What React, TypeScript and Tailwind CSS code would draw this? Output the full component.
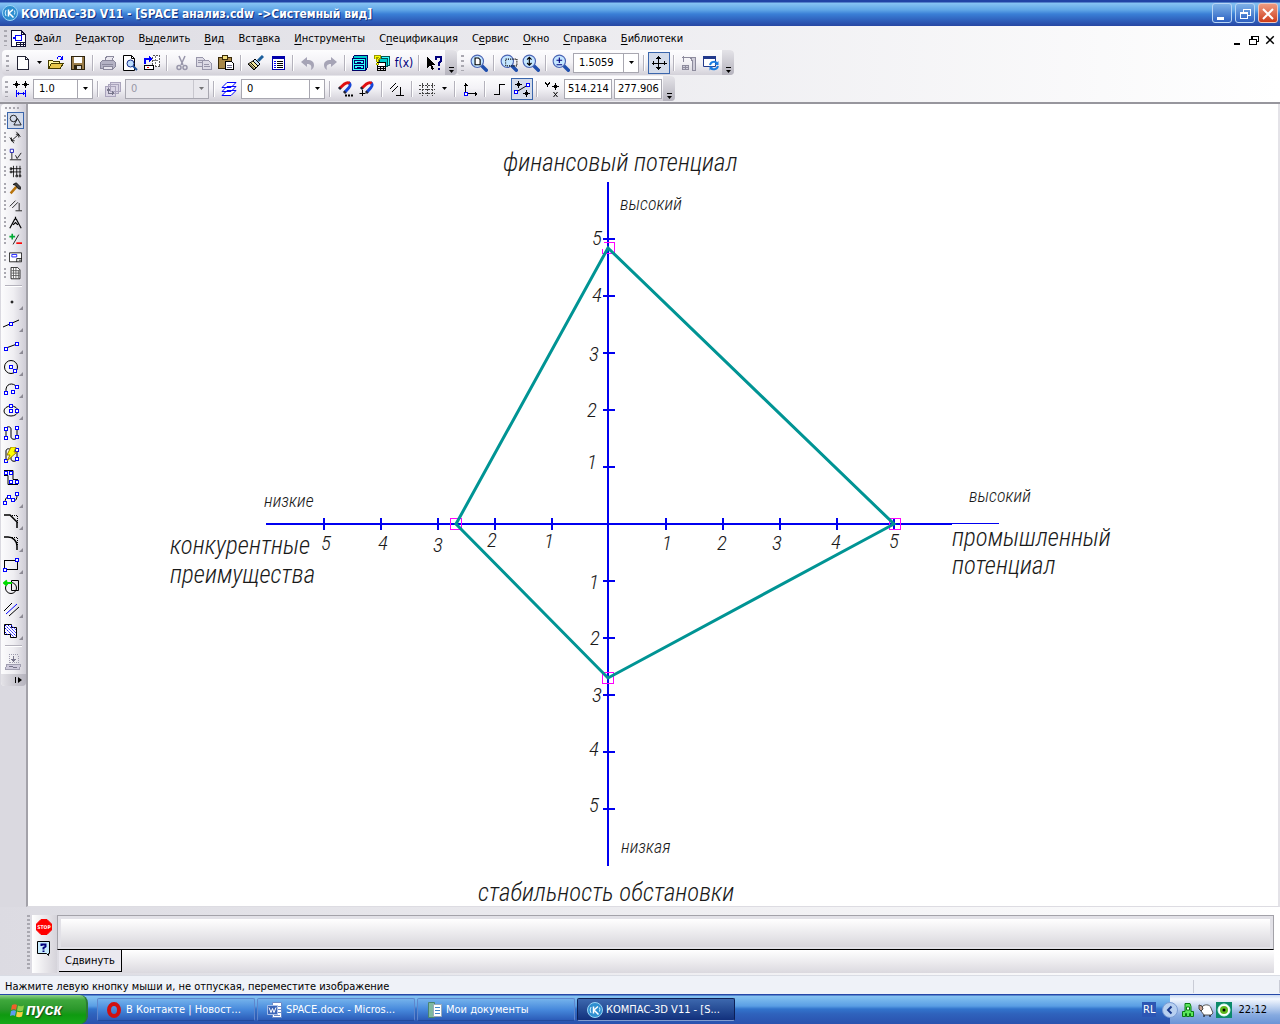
import { useState } from 'react';
import type { ReactNode } from 'react';
import { clsx } from 'clsx';

interface IcoProps {
    children: ReactNode;
    smooth?: boolean;
    className?: string;
}

const Ico = ({ children, smooth, className = 'h-4 w-4' }: IcoProps) => (
    <svg
        viewBox="0 0 16 16"
        fill="none"
        stroke="#000"
        shapeRendering={smooth ? 'auto' : 'crispEdges'}
        className={clsx('block shrink-0', className)}
        aria-hidden="true"
    >
        {children}
    </svg>
);

// Small blue anchor point used by most drawing tools
const Node = ({ x, y }: { x: number; y: number }) => (
    <rect x={x - 1.5} y={y - 1.5} width="3" height="3" fill="#fff" stroke="#00f" shapeRendering="crispEdges" />
);

/* ---------- file and view icons ---------- */

const NewIcon = () => (
    <Ico>
        <path d="M2.500 1.500h8l3 3v10h-11z" fill="#fff" stroke="#223" />
        <path d="M10.500 1.500v3h3" stroke="#223" />
    </Ico>
);

const OpenIcon = () => (
    <Ico>
        <path d="M.5 13.500v-8h4l1 1h6v2" fill="#fff7a0" stroke="#443c00" />
        <path d="M.5 13.500l3-5h12l-3.500 5z" fill="#e8c84c" stroke="#443c00" />
        <path d="M9 3.500c1-2.500 4-2.500 5 0M14.500 1v3.500h-3" stroke="#00f" />
    </Ico>
);

const SaveIcon = () => (
    <Ico>
        <path d="M1.500 1.500h13v13h-13z" fill="#9a7d4a" stroke="#2d2410" />
        <path d="M4 2h8v6H4z" fill="#fff" stroke="none" />
        <path d="M4.500 10.500h7v4h-7z" fill="#ddd" stroke="#2d2410" />
        <path d="M5 11h2v3H5z" fill="#2d2410" stroke="none" />
    </Ico>
);

const PrintIcon = () => (
    <Ico>
        <path d="M4.500 6l2-4.500h7L12 6" fill="#e8e6ee" stroke="#8a889c" />
        <path d="M.5 7.500l2-2h11l2 2v4l-2 2H.5z" fill="#b4b2c4" stroke="#8a889c" />
        <path d="M2 9.500h11M3 11.500h9v3H3z" fill="#e8e6ee" stroke="#8a889c" />
    </Ico>
);

const PreviewIcon = () => (
    <Ico smooth>
        <path d="M1.500.5h8l3 3v12h-11z" fill="#fff" />
        <path d="M9.500.5v3h3" />
        <circle cx="8.500" cy="8.500" r="3.500" fill="#bfe0ff" stroke="#1c2f8c" />
        <path d="M11 11l4 4" stroke="#1c4f9c" strokeWidth="2" />
    </Ico>
);

const LayoutIcon = () => (
    <Ico>
        <path d="M8.500.5h7v11h-7z" fill="#fff" stroke="#555" strokeDasharray="2 1" />
        <path d="M11.500 1v10M9 5.500h6" stroke="#777" strokeDasharray="2 1" />
        <path d="M.5 10.500h9v4h-9z" fill="#fff" />
        <path d="M3 12.500h2" stroke="#f00" />
        <path d="M1 9V4h5" stroke="#00f" strokeWidth="2" />
        <path d="M5 1l3 3-3 3z" fill="#00f" stroke="#00f" />
    </Ico>
);

const CutIcon = () => (
    <Ico smooth>
        <g stroke="#9896aa" strokeWidth="1.500">
            <path d="M5 1l4 9M11 1L7 10" />
            <circle cx="5" cy="12.500" r="2" />
            <circle cx="11" cy="12.500" r="2" />
        </g>
    </Ico>
);

const CopyIcon = () => (
    <Ico>
        <g fill="#dddbe6" stroke="#9896aa">
            <path d="M.5 2.500h6l2 2v7h-8z" />
            <path d="M6.500 5.500h6l3 3v6h-9z" />
            <path d="M2 5.500h4M2 7.500h4M8 9.500h5M8 11.500h6" />
        </g>
    </Ico>
);

const PasteIcon = () => (
    <Ico>
        <path d="M.5 2.500h13v11H.5z" fill="#a88848" stroke="#3a2a08" />
        <path d="M4.500.5h5v4h-5z" fill="#f4e080" stroke="#3a2a08" />
        <path d="M7.500 6.500h6l2 2v6h-8z" fill="#fff" />
        <path d="M9 10.500h5M9 12.500h5" stroke="#668" />
    </Ico>
);

const BrushIcon = () => (
    <Ico smooth>
        <path d="M15 1l-5 5" stroke="#1c5f9c" strokeWidth="3" />
        <path d="M7 4l5 5-2 2-5-5z" fill="#cde" />
        <path d="M5 6l5 5-4 4L0 9z" fill="#f5e9a0" />
        <path d="M3 8l5 5M1.500 9l5 5" />
    </Ico>
);

const PropsIcon = () => (
    <Ico>
        <path d="M2.500 1.500h12v13h-12z" fill="#fff" stroke="#00a" />
        <path d="M2 2.500h13" stroke="#00a" strokeWidth="3" />
        <path d="M4 6.500h2M4 8.500h2M4 10.500h2M4 12.500h2" stroke="#00f" />
        <path d="M7 6.500h6M7 8.500h6M7 10.500h6M7 12.500h6" />
    </Ico>
);

const UndoIcon = ({ flip }: { flip?: boolean }) => (
    <Ico smooth>
        <g transform={flip ? 'translate(16 0) scale(-1 1)' : undefined}>
            <path d="M1 7l6-5v3c5 0 7 2 7 5 0 2-1 4-3 5 1-4 0-6-4-6v3z" fill="#a6a4b6" stroke="none" />
        </g>
    </Ico>
);

const ManagerIcon = () => (
    <Ico>
        <path d="M.5 3.500l2-3h13v12l-2 3H.5z" fill="#0cc" stroke="#006" />
        <path d="M.5 3.500h13v12H.5z" fill="#3ff" stroke="#006" />
        <path d="M2.500 5.500h9v3h-9zM2.500 10.500h9v3h-9zM5 7h4M5 12h4" stroke="#006" />
    </Ico>
);

const TreeIcon = () => (
    <Ico>
        <path d="M7.500 1.500h8v9h-8z" fill="#3ff" stroke="#055" />
        <path d="M5.500 3.500h8v8h-8z" fill="#0cc" stroke="#055" />
        <path d="M3.500 7.500h8v4h-8z" fill="#fff" />
        <path d="M3.500 11.500h8v4h-8zM6.500 12v3M9.500 12v3M4 13.500h7" />
        <path d="M1 4V1h4v2L3 5v2M3 8v2" stroke="#990" strokeWidth="3" />
        <path d="M1 4V1h4v2L3 5v2M3 8v2" stroke="#ff0" />
    </Ico>
);

const FxIcon = () => <span className="text-[12px] leading-4 text-[#00007c]">f(x)</span>;

const HelpArrowIcon = () => (
    <Ico>
        <path d="M1 2v11l3-3 2 5 2-1-2-4h4z" fill="#000" stroke="none" />
        <path d="M10 5V2h5v4l-2.500 2v3M12.500 13v2" stroke="#00007c" strokeWidth="2" />
    </Ico>
);

const Lens = ({ children }: { children: ReactNode }) => (
    <Ico smooth className="h-[18px] w-[18px]">
        <path d="M10.500 10.500l4 4" stroke="#1f4fae" strokeWidth="3" strokeLinecap="round" />
        <circle cx="6.500" cy="6.500" r="5.500" fill="#c4e6ff" stroke="#4a64b4" />
        {children}
    </Ico>
);

const PanIcon = () => (
    <Ico>
        <path d="M7.500 1v14M.5 8h15" />
        <path d="M5 3.500h5M6 2.500h3M5 12.500h5M6 13.500h3M2.500 6v4M13.500 6v4" />
    </Ico>
);

const CaliperIcon = () => (
    <Ico>
        <g fill="#cfcdd9" stroke="#8d8b9d">
            <path d="M1 2.500h14M2.500 1v6M9.500 2.500h5v13h-3v-9z" />
            <path d="M1.500 10.500h6v4h-6zM4.500 11v3M2 12.500h5" />
        </g>
    </Ico>
);

const RefreshIcon = () => (
    <Ico smooth>
        <path d="M.5 1.500h12v10H.5z" fill="#fff" stroke="#223a8c" />
        <path d="M0 2.500h13" stroke="#223a8c" strokeWidth="3" />
        <path d="M7 10c1-4 6-4 7-1M15 11c-1 4-6 4-7 2" stroke="#1a7be0" strokeWidth="2" />
        <path d="M15.500 6v4h-4zM6.500 15.500v-4h4z" fill="#1a7be0" stroke="none" />
    </Ico>
);

/* ---------- current state icons ---------- */

const StepIcon = () => (
    <Ico>
        <path d="M3.500 0v7M0 3.500h7M12.500 0v7M9 3.500h7M2.500 2.500h2v2h-2zM11.500 2.500h2v2h-2z" />
        <path d="M3.500 9v7M12.500 9v7M4 12.500h8M5.500 11v3M10.500 11v3" stroke="#00f" />
    </Ico>
);

const ViewsIcon = () => (
    <Ico>
        <path d="M5.500 1.500h10v9h-10zM3.500 3.500h10v9h-10zM.5 5.500h10v10h-10z" fill="#d9d4e4" stroke="#aaa4bc" />
        <path d="M3.500 8v4h5M2 9.500l1.500-2 1.500 2M7 10.500l2 1.500-2 2" stroke="#77758a" />
    </Ico>
);

const LayersIcon = () => (
    <Ico smooth>
        <path
            d="M1 14.500h9l5-5H6zM1 10.500h9l5-5H6zM1 6.500h9l5-5H6z"
            fill="#fff"
            stroke="#00f"
        />
    </Ico>
);

const Magnet = ({ cross }: { cross?: boolean }) => (
    <Ico smooth>
        <path d="M8 11l4-4.500c2-2 1-4-.5-5" stroke="#1747d8" strokeWidth="3" />
        <path d="M3 7l4.500-4c2-1.500 3.500-2 5-.5" stroke="#e01010" strokeWidth="3" />
        <path d="M2 8l1.500-1.500M7 12l1.500-1.500" stroke="#223" strokeWidth="3" />
        {cross ? (
            <path d="M3.500 9v6M.5 12.500h6" />
        ) : (
            <path d="M8 14.500h2M11 14.500h2M14 14.500h2" strokeWidth="2" />
        )}
    </Ico>
);

const ParallelIcon = () => (
    <Ico smooth>
        <path d="M1 8l6-6M3 11l6-6" />
        <path d="M11.500 6v8M7 14.500h8" />
    </Ico>
);

const GridIcon = () => (
    <Ico>
        <path d="M3.500 2v13M8.500 2v13M13.500 2v13M0 4.500h16M0 8.500h16M0 12.500h16" stroke="#444" strokeDasharray="2 1" />
    </Ico>
);

const AxesIcon = () => (
    <Ico>
        <path d="M3.500 2v10.500H15M1.500 4h4M13.500 10.500v4M2.500 3h2M14.500 11.500v2" />
        <Node x={4} y={13} />
    </Ico>
);

const OrthoIcon = () => (
    <Ico>
        <path d="M2 13.500h5.500v-10H13" />
    </Ico>
);

const SnapIcon = () => (
    <Ico>
        <path d="M3 10.500L13 4.500" shapeRendering="auto" />
        <path d="M4.500 0v7M1 3.500h7M12.500 9v7M9 12.500h7M3.500 2.500h2v2h-2zM11.500 11.500h2v2h-2z" />
        <Node x={2} y={11} />
        <Node x={14} y={4} />
    </Ico>
);

const CoordIcon = () => (
    <Ico>
        <path d="M1.500 1v1l2 2v2M5.500 1v1l-2 2" />
        <path d="M11.500 2v7M8 5.500h7M10.500 4.500h2v2h-2z" />
        <path d="M9.500 11l4 5M13.500 11l-4 5" shapeRendering="auto" />
    </Ico>
);

/* ---------- left panel icons ---------- */

const panelIcons: { label: string; icon: ReactNode }[] = [
    { label: 'Геометрия', icon: <><circle cx="5.500" cy="5.500" r="4" /><path d="M10.500 5.500l4.500 8H6z" /></> },
    { label: 'Размеры', icon: <path d="M3 12l9-8M1 8l5 7M9 1l5 6M3 12v-4M3 12h4M12 4H8.500M12 4v4" /> },
    { label: 'Обозначения', icon: <><path d="M3.500 6v8M1 14.500h14M8 9l2 4 5-7" /><path d="M1.500 1.500h4v4h-4z" fill="#fff" stroke="#00a" /></> },
    { label: 'Обозначения для строительства', icon: <path d="M5.500 1v14M9.500 1v12M13.500 1v12M2 4.500h13M3 8.500h12M1.500 3.500h2v2h-2zM1.500 7.500h2v2h-2zM8.500 12.500h2v2h-2zM12.500 12.500h2v2h-2z" /> },
    { label: 'Редактирование', icon: <><path d="M9 6l-7 8" stroke="#b8740c" strokeWidth="3" /><path d="M5 3l4-2 5 5v3l-3-1-3-4z" fill="#444" /></> },
    { label: 'Параметризация', icon: <path d="M1 9l7-7M4 11l7-7M12.500 5v9M8 14.500h8" /> },
    { label: 'Измерения', icon: <path d="M8 1v3M7 4L1 15M9 4l6 11M5 11l3-3 3 3M6 4h4" strokeWidth="1.500" /> },
    { label: 'Выделение', icon: <><path d="M4 1v7M.5 4.500h7" stroke="#0a3" strokeWidth="2" /><path d="M12 2L5 14" /><path d="M9 12.500h7" stroke="#f00" strokeWidth="2" /></> },
    { label: 'Ассоциативные виды', icon: <><path d="M.5 3.500h15v11H.5z" fill="#fff" /><path d="M3.500 5.500h6v3h-6z" stroke="#00f" /><path d="M9.500 10.500h6M9.500 10.500v4M12 12.500h3" /></> },
    { label: 'Спецификация', icon: <><path d="M2.500.5h8l3 3v11h-11z" fill="#fff" /><path d="M3 4.500h10M3 7.500h10M3 10.500h10M5.500 1v13M8.500 1v13M11.500 4v10" stroke="#555" /></> },
];

const toolIcons: { label: string; icon: ReactNode; plain?: boolean }[] = [
    { label: 'Точка', icon: <circle cx="9" cy="9" r="1" fill="#888" /> },
    { label: 'Вспомогательная прямая', icon: <><path d="M0 12L16 5" /><Node x={8} y={9} /></> },
    { label: 'Отрезок', icon: <><path d="M3 11l11-4" /><Node x={3} y={12} /><Node x={14} y={7} /></> },
    { label: 'Окружность', icon: <><circle cx="8" cy="8" r="6.500" /><Node x={8} y={8} /><Node x={12} y={12} /></> },
    { label: 'Дуга', icon: <><path d="M3 11C2 2 10 1 14 6" /><Node x={3} y={12} /><Node x={10} y={11} /><Node x={14} y={6} /></> },
    { label: 'Эллипс', icon: <><ellipse cx="8" cy="8" rx="7" ry="5" /><Node x={8} y={8} /><Node x={8} y={3} /><Node x={14} y={8} /></> },
    { label: 'Непрерывный ввод объектов', plain: true, icon: <><path d="M3 12V4c0-3 5-3 5 0v8c0 3 6 3 6 0V3" /><Node x={3} y={4} /><Node x={3} y={13} /><Node x={14} y={3} /><Node x={14} y={12} /></> },
    { label: 'Линия', plain: true, icon: <><path d="M3 12V4c0-3 5-3 5 0v8c0 3 6 3 6 0V3" /><Node x={3} y={14} /><Node x={14} y={3} /><Node x={14} y={12} /><path d="M8 0h5l-2 5h3L4 14l3-6H4z" fill="#ff0" stroke="#997a00" /></> },
    { label: 'Мультилиния', plain: true, icon: <><path d="M1 1.500h9v9h5M1 6.500h4v9h10" /><Node x={3} y={4} /><Node x={8} y={4} /><Node x={8} y={13} /><Node x={14} y={13} /></> },
    { label: 'Кривая Безье', icon: <><path d="M2 12c0-7 4-7 6-4s6 3 6-4" /><Node x={2} y={12} /><Node x={6} y={6} /><Node x={10} y={9} /><Node x={14} y={3} /></> },
    { label: 'Фаска', icon: <><path d="M1 2h6l7 7v6" strokeWidth="1.500" /><path d="M7 2.500h7.500v7" strokeDasharray="1 1" shapeRendering="crispEdges" /></> },
    { label: 'Скругление', icon: <><path d="M1 2h4c5 0 9 4 9 9v4" strokeWidth="1.500" /><path d="M7 2.500h7.500v7" strokeDasharray="1 1" shapeRendering="crispEdges" /></> },
    { label: 'Прямоугольник', icon: <><path d="M1.500 3.500h13v9h-13z" shapeRendering="crispEdges" /><Node x={2} y={13} /><Node x={14} y={3} /></> },
    { label: 'Собрать контур', plain: true, icon: <><path d="M8.500 1.500h7v10h-7z" /><circle cx="8" cy="9" r="5.500" /><path d="M1 4h8M4 1.500L1 4l3 2.500" stroke="#0d0" strokeWidth="2" /></> },
    { label: 'Эквидистанта', icon: <><path d="M1 10l8-8M6 15l10-9" /><path d="M3 13L14 3" stroke="#00f" /></> },
    { label: 'Штриховка', icon: <><path d="M1.500 1.500h7v3h5v10h-6v-3h-6z" fill="#fff" /><path d="M2 5l9 9M2 9l3 3M5 2l8 8M2 2l11 11M8 2l5 5" stroke="#00f" strokeDasharray="2 1" /></> },
];

/* ---------- shared controls ---------- */

const Grip = () => (
    <span className="h-4 w-[3px] shrink-0 bg-[repeating-linear-gradient(#a9a8b0_0_2px,transparent_2px_5px)]" />
);

const Sep = () => (
    <span className="mx-[3px] h-4 w-[2px] shrink-0 border-l border-r border-l-[#b4b2bc] border-r-white" />
);

const DownArrow = () => (
    <svg viewBox="0 0 5 3" className="h-[3px] w-[5px] shrink-0" aria-hidden="true">
        <path d="M0 0h5L2.500 3z" />
    </svg>
);

interface ToolButtonProps {
    label: string;
    active?: boolean;
    children: ReactNode;
}

const ToolButton = ({ label, active, children }: ToolButtonProps) => (
    <button
        type="button"
        aria-label={label}
        title={label}
        className={clsx(
            'flex h-[22px] w-[22px] shrink-0 items-center justify-center',
            active && 'border border-[#3a66ac] bg-[#d3dbea]',
        )}
    >
        {children}
    </button>
);

const Overflow = () => (
    <button
        type="button"
        aria-label="Параметры панели"
        className="flex w-3 shrink-0 flex-col items-center justify-end gap-[2px] self-stretch rounded-r-[4px] bg-gradient-to-b from-[#e4e3e8] to-[#b5b3bd] pb-[2px]"
    >
        <span className="h-px w-[5px] bg-black" />
        <DownArrow />
    </button>
);

const Bar = ({ children }: { children: ReactNode }) => (
    <div className="flex h-[25px] items-center rounded-[4px] bg-gradient-to-b from-[#fdfdfe] via-[#f3f2f6] to-[#d3d1d9]">
        {children}
    </div>
);

interface ComboProps {
    label: string;
    value: string;
    width: string;
    disabled?: boolean;
}

const Combo = ({ label, value, width, disabled }: ComboProps) => (
    <span
        className={clsx(
            'mx-px flex h-5 shrink-0 items-center border border-[#a8a7b0]',
            disabled ? 'bg-[#e9e8ed]' : 'bg-white',
            width,
        )}
    >
        <select
            aria-label={label}
            disabled={disabled}
            className={clsx('h-full min-w-0 flex-1 appearance-none bg-transparent pl-[5px] pt-px', disabled && 'text-[#9a98a8]')}
        >
            <option>{value}</option>
        </select>
        <span
            className={clsx(
                'pointer-events-none flex h-full w-[15px] items-center justify-center border-l border-[#a8a7b0]',
                disabled && 'opacity-50',
            )}
        >
            <DownArrow />
        </span>
    </span>
);

const CoordInput = ({ label, initial }: { label: string; initial: string }) => {
    const [value, setValue] = useState(initial);
    return (
        <input
            aria-label={label}
            value={value}
            onChange={(e) => setValue(e.target.value)}
            className="mx-px h-5 w-12 shrink-0 border border-[#a8a7b0] bg-white pl-[3px]"
        />
    );
};

const KompasLogo = () => (
    <Ico smooth>
        <circle cx="8" cy="8" r="7.500" fill="#2f8fd0" stroke="#9ad4f5" />
        <path d="M6.500 4.500v7M11 4.500L7 8l4.500 4.500" stroke="#fff" strokeWidth="1.500" />
        <path d="M4 5a6 6 0 000 6M12.500 5.500a6 6 0 010 4" stroke="#d5efff" />
    </Ico>
);

/* ---------- header ---------- */

const TitleBar = () => (
    <header className="flex h-[26px] items-center bg-[linear-gradient(#2143a5_0_2px,#87c3f3_3px,#5fa5e6_10px,#3a7fd6_14px,#2f62bd_20px,#2747a3)] px-[2px]">
        <KompasLogo />
        <h1 className="ml-[3px] flex-1 truncate pt-[2px] font-['DejaVu_Sans_Condensed','Noto_Sans',sans-serif] text-[12px] font-bold text-white [text-shadow:1px_1px_0_#12307c]">
            КОМПАС-3D V11 - [SPACE анализ.cdw -&gt;Системный вид]
        </h1>
        <div className="flex gap-[3px]">
            <button type="button" aria-label="Свернуть" className="h-5 w-5 rounded-[3px] border border-[#b9d6f5] bg-gradient-to-b from-[#7fb2e8] to-[#2d5fc0]">
                <Ico><path d="M4 13h7" stroke="#fff" strokeWidth="3" /></Ico>
            </button>
            <button type="button" aria-label="Свернуть в окно" className="h-5 w-5 rounded-[3px] border border-[#b9d6f5] bg-gradient-to-b from-[#7fb2e8] to-[#2d5fc0] pl-px">
                <Ico>
                    <path d="M6.500 7V4.500h7v6H11M6 4.500h8" stroke="#fff" />
                    <path d="M3.500 8.500h7v5h-7zM3 7.500h8" stroke="#fff" />
                </Ico>
            </button>
            <button type="button" aria-label="Закрыть" className="h-5 w-5 rounded-[3px] border border-[#f0c8c0] bg-gradient-to-b from-[#ee9a80] to-[#cc3a14] pl-px pt-px">
                <Ico smooth><path d="M3 3l10 10M13 3L3 13" stroke="#fff" strokeWidth="2" /></Ico>
            </button>
        </div>
    </header>
);

// [text before the accelerator, accelerator, rest]
const menuItems = [
    ['', 'Ф', 'айл'],
    ['', 'Р', 'едактор'],
    ['В', 'ы', 'делить'],
    ['', 'В', 'ид'],
    ['Вст', 'а', 'вка'],
    ['', 'И', 'нструменты'],
    ['С', 'п', 'ецификация'],
    ['С', 'е', 'рвис'],
    ['', 'О', 'кно'],
    ['', 'С', 'правка'],
    ['', 'Б', 'иблиотеки'],
];

const MenuBar = () => (
    <nav className="flex h-6 items-center pl-1">
        <Grip />
        <Ico className="ml-[3px] h-[17px] w-[17px]">
            <path d="M1.500.5h9l4 4v11h-13z" fill="#fff" stroke="#113" />
            <path d="M10.500.5v4h4" stroke="#113" />
            <path d="M3 7.500h2M5.500 5.500h5v4h-5z" stroke="#00f" />
            <path d="M6 11.500h9M6 13.500h9M6.500 11v4M9.500 11v4M12.500 11v4" stroke="#113" />
        </Ico>
        {menuItems.map(([before, key, after]) => (
            <button key={before + key + after} type="button" className="px-[7px] pt-px">
                {before}
                <span className="underline underline-offset-2">{key}</span>
                {after}
            </button>
        ))}
        <div className="ml-auto flex items-center gap-1 pr-1 pt-1">
            <button type="button" aria-label="Свернуть документ">
                <Ico className="h-3 w-3"><path d="M3 13h7" strokeWidth="3" /></Ico>
            </button>
            <button type="button" aria-label="Восстановить документ">
                <Ico className="h-3 w-3"><path d="M5 6V3h9v7h-3M2 7h9v7H2z" strokeWidth="2" /></Ico>
            </button>
            <button type="button" aria-label="Закрыть документ">
                <Ico smooth className="h-3 w-3"><path d="M3 3l10 10M13 3L3 13" strokeWidth="2" /></Ico>
            </button>
        </div>
    </nav>
);

const StandardToolbars = () => (
    <div className="flex h-[26px] items-start pl-[2px]">
        <Bar>
            <span className="flex w-[10px] justify-center"><Grip /></span>
            <ToolButton label="Создать"><NewIcon /></ToolButton>
            <button type="button" aria-label="Вид документа" className="flex w-[11px] justify-center"><DownArrow /></button>
            <ToolButton label="Открыть"><OpenIcon /></ToolButton>
            <ToolButton label="Сохранить"><SaveIcon /></ToolButton>
            <Sep />
            <ToolButton label="Печать"><PrintIcon /></ToolButton>
            <ToolButton label="Предварительный просмотр"><PreviewIcon /></ToolButton>
            <ToolButton label="Разметка страницы"><LayoutIcon /></ToolButton>
            <Sep />
            <ToolButton label="Вырезать"><CutIcon /></ToolButton>
            <ToolButton label="Копировать"><CopyIcon /></ToolButton>
            <ToolButton label="Вставить"><PasteIcon /></ToolButton>
            <Sep />
            <ToolButton label="Копировать свойства"><BrushIcon /></ToolButton>
            <ToolButton label="Свойства"><PropsIcon /></ToolButton>
            <Sep />
            <ToolButton label="Отменить"><UndoIcon /></ToolButton>
            <ToolButton label="Повторить"><UndoIcon flip /></ToolButton>
            <Sep />
            <ToolButton label="Менеджер документа"><ManagerIcon /></ToolButton>
            <ToolButton label="Менеджер библиотек"><TreeIcon /></ToolButton>
            <ToolButton label="Переменные"><FxIcon /></ToolButton>
            <Sep />
            <ToolButton label="Справка"><HelpArrowIcon /></ToolButton>
            <Overflow />
        </Bar>
        <Bar>
            <span className="flex w-[11px] justify-center"><Grip /></span>
            <ToolButton label="Показать все">
                <Lens><path d="M4.500 3.500h3l1.500 1.500v4.500H4.500z" fill="#fff" /></Lens>
            </ToolButton>
            <Sep />
            <ToolButton label="Увеличить рамкой">
                <Lens><path d="M5 4.500h10v6H5z" strokeDasharray="1 1" /></Lens>
            </ToolButton>
            <ToolButton label="Масштаб">
                <Lens><path d="M6.500 3v7M4.500 5l2-2 2 2M4.500 8l2 2 2-2" /></Lens>
            </ToolButton>
            <Sep />
            <ToolButton label="Приблизить">
                <Lens><path d="M6.500 3v5M4 5.500h5M4 9.500h5" stroke="#00007c" /></Lens>
            </ToolButton>
            <Combo label="Текущий масштаб" value="1.5059" width="w-[66px]" />
            <Sep />
            <ToolButton label="Сдвинуть" active><PanIcon /></ToolButton>
            <Sep />
            <ToolButton label="Перестроить"><CaliperIcon /></ToolButton>
            <ToolButton label="Обновить изображение"><RefreshIcon /></ToolButton>
            <Overflow />
        </Bar>
    </div>
);

const StateToolbar = () => (
    <div className="flex h-[26px] items-start pl-[2px]">
        <Bar>
            <span className="flex w-2 justify-center"><Grip /></span>
            <ToolButton label="Шаг курсора"><StepIcon /></ToolButton>
            <Combo label="Шаг курсора" value="1.0" width="w-[60px]" />
            <Sep />
            <ToolButton label="Состояния видов"><ViewsIcon /></ToolButton>
            <Combo label="Текущий вид" value="0" width="w-[84px]" disabled />
            <Sep />
            <ToolButton label="Состояния слоев"><LayersIcon /></ToolButton>
            <Combo label="Текущий слой" value="0" width="w-[84px]" />
            <Sep />
            <ToolButton label="Настройка глобальных привязок"><Magnet /></ToolButton>
            <ToolButton label="Запретить привязки"><Magnet cross /></ToolButton>
            <Sep />
            <ToolButton label="Параметрический режим"><ParallelIcon /></ToolButton>
            <Sep />
            <ToolButton label="Сетка"><GridIcon /></ToolButton>
            <button type="button" aria-label="Настройка сетки" className="flex w-[13px] justify-center"><DownArrow /></button>
            <Sep />
            <ToolButton label="Локальная система координат"><AxesIcon /></ToolButton>
            <Sep />
            <ToolButton label="Ортогональное черчение"><OrthoIcon /></ToolButton>
            <ToolButton label="Округление" active><SnapIcon /></ToolButton>
            <Sep />
            <ToolButton label="Координаты курсора"><CoordIcon /></ToolButton>
            <CoordInput label="Координата X" initial="514.214" />
            <CoordInput label="Координата Y" initial="277.906" />
            <Overflow />
        </Bar>
    </div>
);

/* ---------- work area ---------- */

const Corner = () => (
    <svg viewBox="0 0 4 4" className="h-1 w-1 shrink-0 self-end" aria-hidden="true">
        <path d="M4 0v4H0z" fill="#8c8a94" />
    </svg>
);

const CompactPanel = () => (
    <aside className="w-[26px] shrink-0 bg-[#dad9e0] pl-px">
        <div className="rounded-[4px] bg-gradient-to-r from-[#fcfcfd] via-[#efeef2] to-[#cfcdd6]">
            <div className="flex h-2 items-center pl-1">
                <span className="h-[2px] w-4 bg-[repeating-linear-gradient(90deg,#a9a8b0_0_2px,transparent_2px_4px)]" />
            </div>
            {panelIcons.map(({ label, icon }, i) => (
                <div key={label} className="flex h-[17px] items-center gap-px pl-[3px]">
                    <span className="h-3 w-[2px] bg-[repeating-linear-gradient(#a9a8b0_0_2px,transparent_2px_4px)]" />
                    <button
                        type="button"
                        aria-label={label}
                        title={label}
                        className={clsx(
                            'flex h-[17px] w-[17px] items-center justify-center',
                            i === 0 && 'border border-[#3a66ac] bg-[#d3dbea]',
                        )}
                    >
                        <Ico smooth className="h-[13px] w-[13px]">{icon}</Ico>
                    </button>
                </div>
            ))}
            <div className="mx-1 my-[3px] h-[2px] border-b border-t border-b-white border-t-[#b4b2bc]" />
            {toolIcons.map(({ label, icon, plain }) => (
                <button
                    key={label}
                    type="button"
                    aria-label={label}
                    title={label}
                    className="flex h-[22px] w-full items-center pb-[2px] pl-[2px] pt-[2px]"
                >
                    <Ico smooth>{icon}</Ico>
                    {!plain && <Corner />}
                </button>
            ))}
            <div className="mx-1 my-[3px] h-[2px] border-b border-t border-b-white border-t-[#b4b2bc]" />
            <button type="button" aria-label="Вставить вид" className="flex h-6 w-full items-center pl-1">
                <Ico>
                    <path d="M4 .5h9v8H4z" stroke="#a09eb0" strokeDasharray="1 1" />
                    <path d="M8.500 2v5M6.500 5l2 2 2-2" stroke="#77758a" />
                    <path d="M2 10.500h14l-2 5H0z" fill="#cfcbdc" stroke="#a09eb0" />
                    <path d="M4 12l8 2" stroke="#77758a" />
                </Ico>
            </button>
            <button type="button" aria-label="Параметры панели" className="flex h-3 w-full items-center justify-end rounded-b-[4px] bg-gradient-to-r from-[#e4e3e8] to-[#b5b3bd] pr-1">
                <svg viewBox="0 0 7 6" className="h-[6px] w-[7px]" aria-hidden="true">
                    <path d="M0 0h1v6H0zM3 0l4 3-4 3z" />
                </svg>
            </button>
        </div>
    </aside>
);

const UNIT = 57;
const ticks = [1, 2, 3, 4, 5];

// Vertices of the position polygon, relative to the axes' origin
const vertices = [
    [0, -276],
    [286, 0],
    [0, 154],
    [-152, 0],
];

const tickLabels: [string, number, number][] = [
    ['5', -16, -279], ['4', -16, -222], ['3', -19, -163], ['2', -21, -107], ['1', -21, -55],
    ['1', -19, 65], ['2', -18, 121], ['3', -16, 178], ['4', -19, 232], ['5', -19, 288],
    ['5', -287, 26], ['4', -230, 26], ['3', -175, 28], ['2', -121, 23], ['1', -64, 24],
    ['1', 54, 26], ['2', 109, 26], ['3', 164, 26], ['4', 223, 25], ['5', 281, 24],
];

const captions: [string, number, number][] = [
    ['финансовый потенциал', -105, -353],
    ['конкурентные', -438, 30],
    ['преимущества', -438, 59],
    ['промышленный', 344, 22],
    ['потенциал', 344, 50],
    ['стабильность обстановки', -130, 377],
];

const notes: [string, number, number][] = [
    ['высокий', 12, -314],
    ['низкие', -344, -17],
    ['высокий', 361, -22],
    ['низкая', 13, 329],
];

const Drawing = () => (
    <main className="min-w-0 flex-1 border-b border-l-2 border-r-2 border-b-[#dddce2] border-l-[#a3a2a9] border-r-[#e4e3e8] bg-white">
        <svg viewBox="-580 -420 1250 802" className="block w-full" role="img" aria-label="SPACE анализ">
            <g stroke="#0000f0" strokeWidth="2" shapeRendering="crispEdges">
                <path d="M-342 0H344M0-342V342" />
                <path d="M344-.5H391" strokeWidth="1" />
                {ticks.map((n) => (
                    <path
                        key={n}
                        d={`M${n * UNIT + 1}-6v12M${-n * UNIT + 1}-6v12M-5 ${n * UNIT}h12M-5 ${-n * UNIT}h12`}
                    />
                ))}
            </g>
            <g fill="none" stroke="#f0f" shapeRendering="crispEdges">
                <path d="M-4.500-281.500h11v11h-12v-5" />
                <path d="M281.500-5.500h11v11h-11z" />
                <path d="M-5.500 148.500h11v11h-11z" />
                <path d="M-157.500-5.500h11v11h-11z" />
            </g>
            <polygon
                points={vertices.map((v) => v.join(',')).join(' ')}
                fill="none"
                stroke="#009494"
                strokeWidth="3"
            />
            <g className="fill-[#1a1a1a] font-['Roboto_Condensed_Light','Roboto_Condensed','Open_Sans',sans-serif] font-light italic">
                {captions.map(([text, x, y]) => (
                    <text key={text} x={x} y={y} className="text-[25px]">{text}</text>
                ))}
                {notes.map(([text, x, y]) => (
                    <text key={`${text}${x}`} x={x} y={y} className="text-[18px]">{text}</text>
                ))}
                {tickLabels.map(([text, x, y]) => (
                    <text key={`${x},${y}`} x={x} y={y} className="text-[21px]">{text}</text>
                ))}
            </g>
        </svg>
    </main>
);

/* ---------- footer ---------- */

const PropertyPanel = () => (
    <section className="flex h-[68px] pb-[2px] pl-[27px] pr-[6px] pt-2">
        <span className="mr-[2px] h-[54px] w-[3px] bg-[repeating-linear-gradient(#a9a8b0_0_2px,transparent_2px_4px)]" />
        <div className="flex w-[25px] flex-col items-center gap-[5px] bg-gradient-to-r from-white to-[#d5d3da] pr-[2px] pt-1">
            <button type="button" aria-label="Прервать команду">
                <Ico smooth>
                    <path d="M5 .5h6L15.500 5v6L11 15.500H5L.5 11V5z" fill="#f00" stroke="#f00" />
                    <text x="8" y="10" textAnchor="middle" fill="#fff" stroke="none" className="text-[5px] font-bold">STOP</text>
                </Ico>
            </button>
            <button type="button" aria-label="Справка">
                <Ico smooth>
                    <path d="M1.500 1.500h12v12h-1v2l-2-2h-9z" fill="#c8ecff" />
                    <path d="M5.500 6V4.500h4v2L7.500 8v1.500M7.500 10.500v1.500" stroke="#00007c" strokeWidth="2" />
                </Ico>
            </button>
        </div>
        <div className="min-w-0 flex-1">
            <div className="h-[35px] border border-[#a3a2a9] border-b-black bg-[#e2e1e7] px-[3px] pb-[2px] pt-[3px]">
                <div className="h-full bg-gradient-to-b from-white to-[#d8d6dc]" />
            </div>
            <div className="flex h-[23px] pl-[2px]">
                <button type="button" className="h-[22px] border-b border-r border-black bg-[#ebe9f0] px-[6px]">
                    Сдвинуть
                </button>
                <div className="flex-1 bg-gradient-to-b from-white to-[#dbd9df]" />
            </div>
        </div>
    </section>
);

const StatusBar = () => (
    <div className="flex h-[19px] items-center border-t border-[#d9dce4] bg-[#eff2f8] pl-[5px] pt-[3px]">
        <p className="flex-1 truncate">Нажмите левую кнопку мыши и, не отпуская, переместите изображение</p>
        <span className="h-[13px] w-[87px] border-l border-r border-[#c9ccd6]" />
    </div>
);

const tasks: { title: string; icon: ReactNode; active?: boolean }[] = [
    {
        title: 'В Контакте | Новост...',
        icon: <ellipse cx="7" cy="8" rx="5" ry="6" stroke="#d01010" strokeWidth="4" />,
    },
    {
        title: 'SPACE.docx - Micros...',
        icon: (
            <>
                <path d="M5.500.5h9v15h-9z" fill="#fff" stroke="#6a8ac8" />
                <path d="M11 4.500h3M11 7.500h3M11 10.500h3M7 13.500h6" stroke="#6a8ac8" />
                <path d="M.5 3.500h10v9H.5z" fill="#3c66b8" stroke="#a9c0ea" />
                <path d="M2 5.500l2 5 1.500-4 1.500 4 2-5" stroke="#fff" />
            </>
        ),
    },
    {
        title: 'Мои документы',
        icon: (
            <>
                <path d="M1.500.5h6v15h-6z" fill="#7fb8a0" stroke="#4a8470" />
                <path d="M6.500 2.500h8v12h-8z" fill="#fff" stroke="#9ab" />
                <path d="M8 5.500h5M8 8.500h5M8 11.500h5" stroke="#48c" />
            </>
        ),
    },
    { title: 'КОМПАС-3D V11 - [S...', icon: null, active: true },
];

const Taskbar = () => (
    <footer className="flex h-[30px] bg-[linear-gradient(#2548a8_0_1px,#86c4f2_2px,#5a9ee4_12px,#3274cc_15px,#2f62bc_20px,#2a52ae)] pt-px">
        <button
            type="button"
            className="mr-[9px] flex w-[88px] items-center rounded-r-[8px] border-r-2 border-[#2c7a34] bg-[linear-gradient(#8fd08a,#3fa83c_5px,#2c982c_14px,#0f9a10_20px,#17a81a)] pl-[10px] text-[16px] font-bold italic text-white [text-shadow:1px_1px_1px_#1a4a1a]"
        >
            <Ico smooth>
                <g stroke="none">
                    <path d="M2 3c2-1 4-1 5 0L6 8c-1-1-3-1-5 0z" fill="#f0602c" />
                    <path d="M8 3.500c2 1 4 1 6 0l-1 5c-2 1-4 1-6 0z" fill="#8ed04a" />
                    <path d="M1 9c2-1 4-1 5 0l-1 5c-1-1-3-1-5 0z" fill="#5a9cf0" />
                    <path d="M7 9.500c2 1 4 1 6 0l-1 5c-2 1-4 1-6 0z" fill="#f8d040" />
                </g>
            </Ico>
            <span className="font-['Liberation_Sans',sans-serif]">пуск</span>
        </button>
        <div className="flex flex-1 gap-[2px] py-[3px]">
            {tasks.map(({ title, icon, active }) => (
                <button
                    key={title}
                    type="button"
                    className={clsx(
                        'flex w-[158px] items-center gap-[3px] rounded-[2px] border pl-[9px] text-left text-white',
                        active
                            ? 'border-[#0d1f55] border-b-[#7f9ccf] bg-gradient-to-b from-[#3d68ae] to-[#12307c]'
                            : 'border-[#5f86cc] border-b-[#234a9c] bg-gradient-to-b from-[#74b2ec] via-[#4789dc] to-[#2c5cb8]',
                    )}
                >
                    {icon ? <Ico smooth>{icon}</Ico> : <KompasLogo />}
                    <span className="truncate">{title}</span>
                </button>
            ))}
        </div>
        <div className="flex items-center">
            <button type="button" className="mr-[14px] h-[15px] bg-[#2c56b4] px-px leading-[15px] text-white">RL</button>
            <div className="flex h-full items-center gap-[2px] bg-[linear-gradient(#c9d9f2,#f4f8fe_4px,#b7cdee_13px,#86aae0_20px,#6a94d6)] pr-[13px]">
                <button type="button" aria-label="Показать скрытые значки" className="-ml-2">
                    <Ico smooth>
                        <circle cx="8" cy="8" r="7.500" fill="#b8d0f0" stroke="#7b9cd4" />
                        <path d="M9.500 4.500L6 8l3.500 3.500" stroke="#1a3a8c" strokeWidth="2" />
                    </Ico>
                </button>
                <Ico smooth>
                    <path d="M5 1.500h5l1 3v5h2.500v5h-3v-3h-1v3h-3v-3h-1v3h-3v-5H5v-5z" fill="#5be85b" stroke="#0a7a14" />
                    <path d="M6.500 5h3v3h-3z" fill="#fff" stroke="#0a7a14" />
                </Ico>
                <Ico smooth>
                    <path d="M4 5c2-3 8-3 9 1l2 5-2 2H6L3 9z" fill="#fff" stroke="#555" />
                    <path d="M1 3l3 1 1 3-2 2-2-2z" fill="#c8a090" stroke="#444" />
                    <path d="M6 13v2M12 13v2" />
                </Ico>
                <Ico smooth>
                    <path d="M0 0h16v16H0z" fill="#0c8a6a" stroke="none" />
                    <circle cx="8" cy="8" r="6" fill="#fff" stroke="#dfe" />
                    <circle cx="8" cy="8" r="4" fill="#5fb81c" stroke="none" />
                    <circle cx="8" cy="8" r="1.500" fill="#000" stroke="none" />
                </Ico>
                <time className="ml-1">22:12</time>
            </div>
        </div>
    </footer>
);

const App = () => (
    <div className="flex min-h-screen flex-col bg-gradient-to-r from-[#dcdbe2] to-white font-['DejaVu_Sans_Condensed','Noto_Sans',sans-serif] text-[11px] leading-4 text-black">
        <TitleBar />
        <MenuBar />
        <StandardToolbars />
        <StateToolbar />
        <div className="flex flex-1 border-t-2 border-[#97969d]">
            <CompactPanel />
            <Drawing />
        </div>
        <PropertyPanel />
        <StatusBar />
        <Taskbar />
    </div>
);

export default App;
